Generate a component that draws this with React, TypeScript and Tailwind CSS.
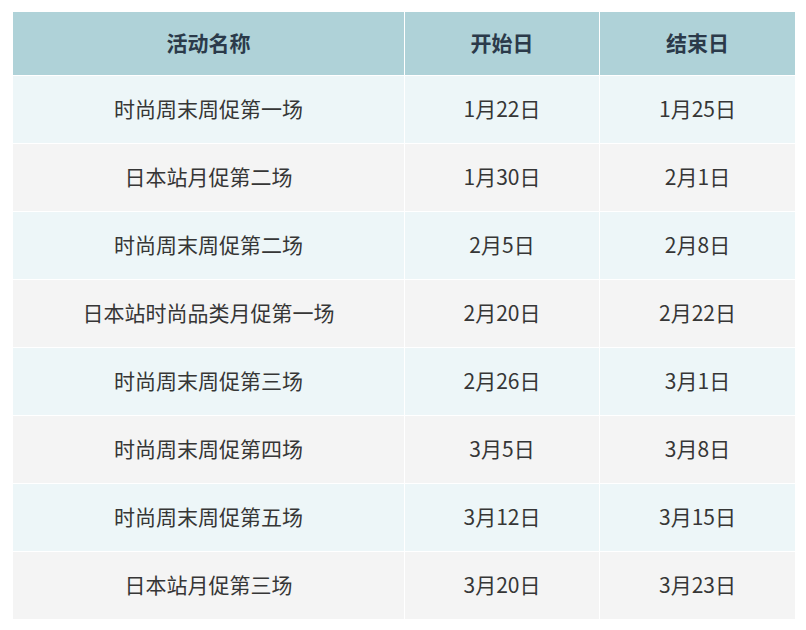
import React from "react";

const rows: [string, string, string][] = [
  ["时尚周末周促第一场", "1月22日", "1月25日"],
  ["日本站月促第二场", "1月30日", "2月1日"],
  ["时尚周末周促第二场", "2月5日", "2月8日"],
  ["日本站时尚品类月促第一场", "2月20日", "2月22日"],
  ["时尚周末周促第三场", "2月26日", "3月1日"],
  ["时尚周末周促第四场", "3月5日", "3月8日"],
  ["时尚周末周促第五场", "3月12日", "3月15日"],
  ["日本站月促第三场", "3月20日", "3月23日"],
];

export default function App() {
  return (
    <div
      className="w-[806px] h-[630px] bg-white pt-[12px] pl-[13px]"
      style={{ fontFamily: '"Noto Sans CJK SC", "Noto Sans", sans-serif' }}
    >
      <div className="grid grid-cols-[391px_194px_195px] gap-px bg-white w-[782px]">
        {["活动名称", "开始日", "结束日"].map((h) => (
          <div
            key={h}
            className="h-[63px] pb-[2px] bg-[#afd2d8] flex items-center justify-center text-[21px] font-bold text-[#2b3a4a]"
          >
            {h}
          </div>
        ))}
        {rows.map((r, i) =>
          r.map((c, j) => (
            <div
              key={i + "-" + j}
              className={
                "h-[67px] pb-[2px] flex items-center justify-center text-[21px] text-[#363636] " +
                (i % 2 === 0 ? "bg-[#edf6f8]" : "bg-[#f4f4f4]")
              }
            >
              {c}
            </div>
          ))
        )}
      </div>
    </div>
  );
}
